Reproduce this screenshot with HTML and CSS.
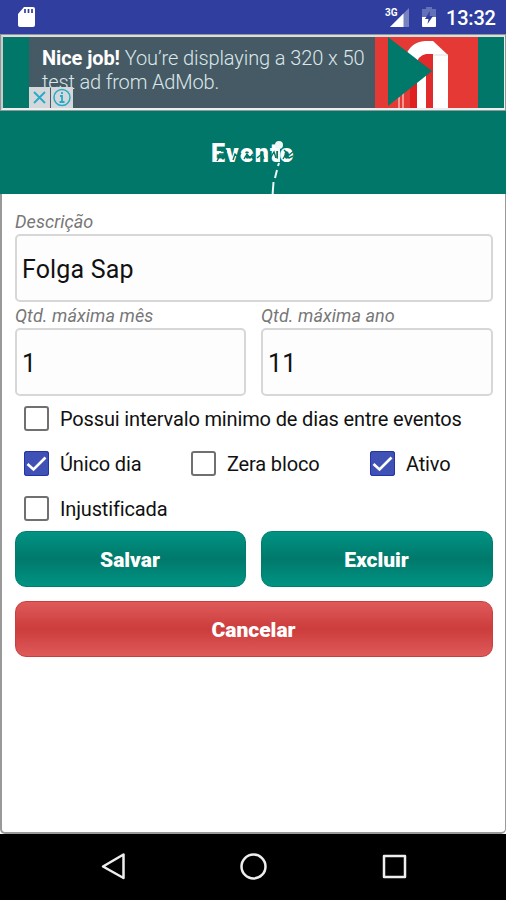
FILE: index.html
```html
<!DOCTYPE html>
<html lang="pt-BR">
<head>
<meta charset="utf-8">
<title>Evento</title>
<link rel="stylesheet" href="styles.css">
</head>
<body>
<div class="status">
  <svg class="sd" width="18" height="22" viewBox="0 0 18 22"><path d="M6 1H15Q17 1 17 3V19Q17 21 15 21H2Q0 21 0 19V8Z" fill="#fff"/><path d="M7 3v4M10.500 3v4M14 3v4" stroke="#303f9f" stroke-width="1.700"/></svg>
  <div class="signal"><span class="net">3G</span><svg width="27" height="22" viewBox="0 0 27 22"><path d="M26 1V20H7Z" fill="#7782c1"/><path d="M20.500 6.500V20H7Z" fill="#fff"/></svg></div>
  <svg class="battery" width="16" height="22" viewBox="0 0 16 22"><path d="M5 1H11V3H15V12H1V3H5Z" fill="#6470b8"/><path d="M1 11H15V20Q15 21 14 21H2Q1 21 1 20Z" fill="#fff"/><path d="M9 5 4 13H7.500L6.500 18 12 10H8.500Z" fill="#303f9f"/></svg>
  <span class="clock">13:32</span>
</div>
<div class="ad">
  <div class="ad-text"><div><b>Nice job!</b> You’re displaying a 320 x 50</div><div class="line2">test ad from AdMob.</div>
    <div class="ad-badges">
      <svg width="21" height="21" viewBox="0 0 21 21"><path d="M0 0H21V21H0Z" fill="#d5d8da"/><path d="M5 5 16 16M16 5 5 16" stroke="#25aac8" stroke-width="1.800"/></svg>
      <svg width="22" height="21" viewBox="0 0 22 21"><path d="M0 0H22V21H0Z" fill="#d5d8da"/><circle cx="11" cy="10.500" r="8" fill="none" stroke="#25aac8" stroke-width="1.500"/><path d="M11 5v2M9 9h2v6M8.500 15h5" fill="none" stroke="#25aac8" stroke-width="1.800"/></svg>
    </div>
  </div>
  <svg class="ad-art" width="103" height="71" viewBox="0 0 103 71"><path d="M0 0H103V71H0Z" fill="#e53935"/><path d="M31 18Q36 5 50 4H58L73 18V71H42V30Z" fill="#fff"/><path d="M41 29Q43 18 51 17H58V71H51V34L42 42Z" fill="#e02a2b"/><path d="M42 35H51V71H42Z" fill="#fff"/><path d="M35 45H42V71H35Z" fill="#df1f20"/><path d="M24 60v11M28 56v15" stroke="#f6b5b3" stroke-width="1.500"/><path d="M58 18H73" stroke="#ddd"/><path d="M13 0 57 34 13 69Z" fill="#00796b"/></svg>
</div>
<header><div class="title">Evento
  <svg class="wear" width="90" height="56" viewBox="0 0 90 56"><path d="M7 23l3-5 3 3 4-5M9 16h8M23 22l2-6 3 3 3-4M34 21l3-5 3 4 3-4M47 20l5-4 2 5M61 19l3-5 2 6M74 12l5 5 5-4M73 21l3-5 3 4 4-2M11 13h6" fill="none" stroke="#007769" stroke-width="1.400"/><path d="M60 7a4 4 0 1 0 8 0a4 4 0 1 0-8 0" transform="translate(5 0)" fill="#edf7f5"/><path d="M69 9v15M69 25l-1 3M67 32l-2 8M63.500 44l-1 14" stroke="#edf7f5" stroke-width="2"/></svg>
</div></header>
<main>
  <label class="caption">Descrição</label>
  <div class="field">Folga Sap</div>
  <div class="pair">
    <div><label class="caption">Qtd. máxima mês</label><div class="field">1</div></div>
    <div><label class="caption">Qtd. máxima ano</label><div class="field">11</div></div>
  </div>
  <div class="checks">
    <div class="check wide"><i class="box"></i><span>Possui intervalo minimo de dias entre eventos</span></div>
    <div class="check"><i class="box on"><svg width="25" height="25" viewBox="0 0 25 25"><path d="M3.500 13 9.500 18.500 21.500 6.500" fill="none" stroke="#fff" stroke-width="2.700"/></svg></i><span>Único dia</span></div>
    <div class="check"><i class="box"></i><span>Zera bloco</span></div>
    <div class="check"><i class="box on"><svg width="25" height="25" viewBox="0 0 25 25"><path d="M3.500 13 9.500 18.500 21.500 6.500" fill="none" stroke="#fff" stroke-width="2.700"/></svg></i><span>Ativo</span></div>
    <div class="check wide"><i class="box"></i><span>Injustificada</span></div>
  </div>
  <div class="pair buttons"><button>Salvar</button><button>Excluir</button></div>
  <button class="cancel">Cancelar</button>
</main>
<nav>
  <svg width="506" height="66" viewBox="0 0 506 66" fill="none" stroke="#eee" stroke-width="2.500" stroke-linejoin="round"><path d="M123.500 20.500V44L103 32.500Z"/><circle cx="253.500" cy="32.500" r="12"/><path d="M384 22H405V43H384Z"/></svg>
</nav>
</body>
</html>
```
FILE: styles.css
```css
* { box-sizing: border-box; }
body { margin: 0; width: 506px; height: 900px; overflow: hidden; background: #fff; font-family: Roboto, sans-serif; color: #111; }
svg { display: block; flex: none; }
.status { height: 34px; background: #303f9f; display: flex; align-items: center; padding: 0 11px 0 18px; color: #fff; }
.sd { margin-right: auto; }
.signal { position: relative; margin-right: 11px; }
.signal svg { margin-top: 1px; }
.net { position: absolute; left: 2px; top: 1px; font-size: 10px; line-height: 12px; font-weight: 700; }
.clock { font-size: 20px; font-weight: 500; line-height: 34px; margin-left: 9px; width: 49px; white-space: nowrap; letter-spacing: -.2px; padding-top: 2px; }
.ad { height: 77px; border: 3px solid #eee; border-top-color: #ddd; border-left-color: #ccc; border-right-width: 2px; outline: 1px solid #8a9a99; outline-offset: -1px; background: #007769; display: flex; padding-left: 26px; }
.ad-text { position: relative; width: 346px; background: #455a64; color: #dce7ea; padding: 9px 0 0 13px; font-size: 20px; line-height: 24px; font-weight: 300; letter-spacing: -.09px; white-space: nowrap; }
.ad-text b { color: #fff; font-weight: 700; }
.line2 { letter-spacing: -.15px; }
.ad-badges { position: absolute; left: 0; bottom: 0; display: flex; gap: 1px; }
header { height: 83px; background: #007769; display: flex; justify-content: center; }
.title { position: relative; width: 84px; padding-top: 27px; font-size: 25px; line-height: 32px; font-weight: 900; color: #fff; letter-spacing: 1.2px; }
.wear { position: absolute; left: -1px; top: 27px; }
main { height: 640px; border: solid #999; border-width: 0 1px 2px 2px; border-radius: 0 0 5px 5px; padding: 18px 12px 0 13px; }
.caption { display: block; font-size: 18px; line-height: 19px; height: 22px; font-style: italic; font-weight: 400; letter-spacing: .08px; color: #777; white-space: nowrap; }
.field { height: 68px; border: 2px solid #d7d7d7; border-radius: 5px; padding: 1px 5px 0; font-size: 25px; line-height: 66px; letter-spacing: .15px; background: #fdfdfd; color: #111; }
.pair { display: grid; grid-template-columns: 231px 232px; gap: 15px; margin-top: 4px; }
.checks { display: grid; grid-template-columns: 167px 179px 112px; grid-auto-rows: 45px; padding-left: 9.400px; }
.check { display: flex; align-items: center; gap: 10.600px; font-size: 20px; letter-spacing: -.15px; white-space: nowrap; }
.wide { grid-column: 1 / -1; }
.box { width: 25px; height: 25px; border: 2px solid #707070; border-radius: 3px; flex: none; }
.on { border: 0; background: #3f51b5; box-shadow: inset 0 0 0 1px #2434a8; }
.buttons { margin-top: 0; }
button { height: 56px; border: 1px solid #007d70; border-radius: 11px; background: linear-gradient(#009383, #00796b 50%, #009383); color: #fff; font: 900 21px Roboto, sans-serif; padding: 1px 1px 0 0; }
.cancel { width: 478px; margin-top: 14px; border-color: #cc3e3e; background: linear-gradient(#df5a5a, #cc3c3c 50%, #df5a5a); }
nav { height: 66px; background: #000; }
```
